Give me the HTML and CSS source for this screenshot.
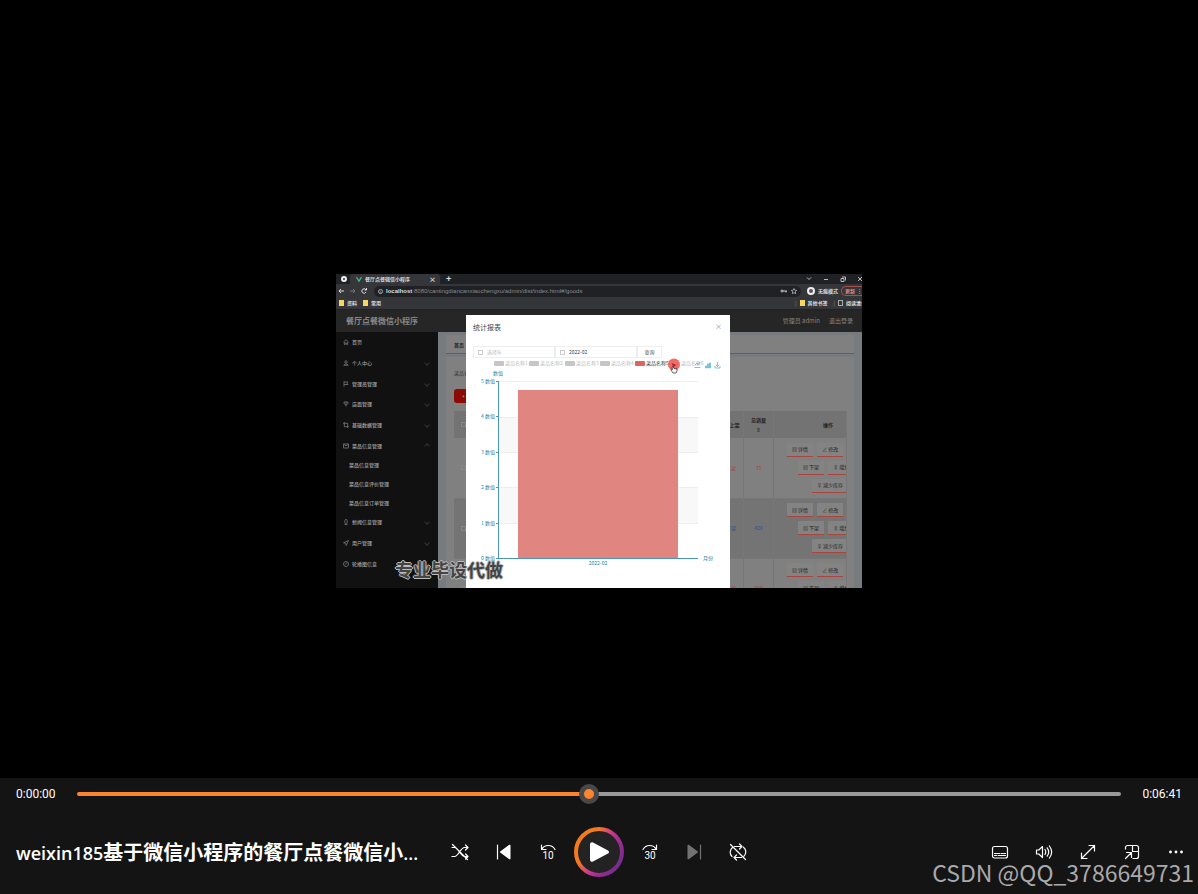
FILE: index.html
```html
<!DOCTYPE html>
<html lang="zh-CN">
<head>
<meta charset="utf-8">
<meta name="viewport" content="width=device-width, initial-scale=1">
<title>weixin185基于微信小程序的餐厅点餐微信小程序</title>
<link rel="stylesheet" href="styles.css">
</head>
<body>
<main class="player">
  <section class="stage">
    <div class="video">
      <div class="browser">
        <div class="tabs">
          <span class="globe"></span>
          <div class="tab">
            <svg class="vue" viewBox="0 0 6 6"><path d="M.5 1 3 5.2 5.500 1" fill="none" stroke="#3fb68b" stroke-width="1.300"/></svg>
            <span class="tab-name">餐厅点餐微信小程序</span><span class="shut">×</span>
          </div>
          <span class="plus">+</span>
          <svg class="win" viewBox="0 0 56 8"><g fill="none" stroke="#bbb" stroke-width="1"><path d="m1 2.500 2 2 2-2M18 4.500h4M52 2l4 4m0-4-4 4"/><path d="M35 3.500h3v3h-3zM36 2h3.500v3.500"/></g></svg>
        </div>
        <div class="address">
          <svg class="nav" viewBox="0 0 32 8"><g fill="none" stroke="#ddd"><path d="M6 4H1m2-2L1 4l2 2"/><path stroke="#777" d="M12 4h5m-2-2 2 2-2 2"/><path d="M28 3a2.200 2.200 0 1 0 0 2M28.500 1v2h-2"/></g></svg>
          <div class="url"><span class="info">i</span><b>localhost</b><span class="path">:8080/cantingdiancanxiaochengxu/admin/dist/index.html#/goods</span>
            <svg class="keys" viewBox="0 0 20 8"><g fill="none" stroke="#ccc"><circle cx="3" cy="4" r="1"/><path d="M4 4h4M7 4v1.500"/><path d="m15 1.500.8 1.700 1.900.2-1.400 1.300.4 1.900-1.700-.9-1.700.9.4-1.900-1.400-1.300 1.900-.2z" stroke-width=".7"/></g></svg>
          </div>
          <span class="face"></span><span class="mode">无痕模式</span><span class="update">更新&nbsp; ⋮</span>
        </div>
        <div class="marks"><i></i><span>资料</span><i></i><span>常用</span><span class="grow"></span><span class="bar">|</span><i></i><span>其他书签</span><span class="bar">|</span><i class="list"></i><span>阅读清单</span></div>
      </div>
      <div class="app-head"><strong>餐厅点餐微信小程序</strong><span>管理员 admin</span><span>退出登录</span></div>
      <div class="app">
        <ul class="menu">
          <li><svg viewBox="0 0 6 6"><path d="M.5 3 3 .7 5.500 3M1.300 3v2.500h1V4h1.400v1.500h1V3"/></svg>首页</li>
          <li class="more"><svg viewBox="0 0 6 6"><circle cx="3" cy="2" r="1.200"/><path d="M.8 5.300h4.400L4 4H2z"/></svg>个人中心</li>
          <li class="more"><svg viewBox="0 0 6 6"><path d="M1 .5v5M1 1h4L4 2.200l1 1.300H1"/></svg>管理员管理</li>
          <li class="more"><svg viewBox="0 0 6 6"><path d="M1 1h4v1.500L3 4 1 2.500zM3 4v1.500M2 2h2"/></svg>店面管理</li>
          <li class="more"><svg viewBox="0 0 6 6"><path d="M1.300 0v4.700H6M0 1.300h4.700V6"/></svg>基础数据管理</li>
          <li class="more open"><svg viewBox="0 0 6 6"><path d="M.5 1h5v4h-5zl2.500 2 2.500-2"/></svg>菜品信息管理</li>
          <li class="sub">菜品信息管理</li>
          <li class="sub">菜品信息评价管理</li>
          <li class="sub">菜品信息订单管理</li>
          <li class="more"><svg viewBox="0 0 6 6"><rect x="1.800" y=".5" width="2.400" height="4" rx="1"/><path d="M1.500 5.500h3"/></svg>新闻信息管理</li>
          <li class="more"><svg viewBox="0 0 6 6"><path d="m.5 2.800 5-2.300-2.300 5-.5-2.200z"/></svg>用户管理</li>
          <li><svg viewBox="0 0 6 6"><circle cx="3" cy="3" r="2.500"/><path d="m2.500 3.500 1.500-2"/></svg>轮播图信息</li>
        </ul>
        <div class="page">
          <div class="crumb">首页</div>
          <div class="panel">
            <div class="search">菜品名称</div>
            <button class="add" type="button">+ 新增</button>
            <table class="goods">
              <thead><tr><th class="c-pick"><input type="checkbox" aria-label="全选"></th><th class="c-up">上架</th><th class="c-sum">总销量<small>0</small></th><th class="c-ops">操作</th></tr></thead>
              <tbody>
                <tr><td><input type="checkbox" aria-label="选择 1"></td><td class="red up">上架</td><td class="red">35</td><td><div class="ops"><div><button type="button">▤ 详情</button><button type="button">∠ 修改</button></div><div class="far"><button type="button">▤ 下架</button><button type="button">♀ 增加库存</button></div><div class="end"><button type="button">♀ 减少库存</button></div></div></td></tr>
                <tr class="alt"><td><input type="checkbox" aria-label="选择 2"></td><td class="blue up">下架</td><td class="blue">426</td><td><div class="ops"><div><button type="button">▤ 详情</button><button type="button">∠ 修改</button></div><div class="far"><button type="button">▤ 下架</button><button type="button">♀ 增加库存</button></div><div class="end"><button type="button">♀ 减少库存</button></div></div></td></tr>
                <tr><td><input type="checkbox" aria-label="选择 3"></td><td class="red up">上架</td><td class="red">280</td><td><div class="ops"><div><button type="button">▤ 详情</button><button type="button">∠ 修改</button></div><div class="far"><button type="button">▤ 下架</button><button type="button">♀ 增加库存</button></div><div class="end"><button type="button">♀ 减少库存</button></div></div></td></tr>
              </tbody>
            </table>
          </div>
        </div>
      </div>
      <div class="modal">
        <header><span>统计报表</span><button type="button" aria-label="关闭">×</button></header>
        <form class="filter"><label><i></i><input type="text" placeholder="选择年" aria-label="选择年"></label><label><i></i><input type="text" value="2022-02" aria-label="月份"></label><button type="button">查询</button></form>
        <svg class="chart" viewBox="466 358 264 230">
          <g class="off"><rect x="494" y="361" width="10" height="5" rx="1"/><text x="505" y="365">菜品名称1</text><rect x="529" y="361" width="10" height="5" rx="1"/><text x="540" y="365">菜品名称2</text><rect x="565" y="361" width="10" height="5" rx="1"/><text x="576" y="365">菜品名称3</text><rect x="600" y="361" width="10" height="5" rx="1"/><text x="611" y="365">菜品名称4</text><text x="681" y="365">菜品名称6</text></g>
          <rect x="635" y="361" width="10" height="5" rx="1" fill="#d96661"/><text x="646" y="365">菜品名称5</text>
          <g fill="#f8f8f8"><path d="M498 417h200v35H498zM498 488h200v35H498z"/></g>
          <path d="M498 381.500h200M498 417.500h200M498 452.500h200M498 487.500h200M498 523.500h200" stroke="#eee"/>
          <rect x="518" y="390" width="160" height="168" fill="#e08580"/>
          <path d="M498.500 381v178M496 558.500h202M496 381.500h2M496 416.500h2M496 452.500h2M496 487.500h2M496 523.500h2" stroke="#4a97b5"/>
          <g class="axis"><text x="498" y="375" text-anchor="middle">数值</text><g text-anchor="end"><text x="495" y="383">5 数值</text><text x="495" y="418">4 数值</text><text x="495" y="454">3 数值</text><text x="495" y="489">2 数值</text><text x="495" y="525">1 数值</text><text x="495" y="560">0 数值</text></g><text x="703" y="560">月份</text><text x="598" y="565" text-anchor="middle">2022-02</text></g>
          <g fill="none" stroke="#5ab8c4" stroke-width=".8"><path d="M694.500 367.500h6M695 365l2-2 1 2 2-3M705.500 368v-2h1v2zM707.500 368v-4h1v4zM709.500 368v-5h1v5zM715 366v2h5v-2M717.500 362v4.500m-1.700-1.700 1.700 1.700 1.700-1.700"/></g>
          <circle cx="674" cy="364.500" r="6" fill="#f05a55" opacity=".9"/>
          <path d="m672 367 1-.5 1 2 3 .5v2l-1 2h-3l-2-3 .2-1 1.300.5z" fill="#fff" stroke="#222" stroke-width=".7"/>
          <path d="m671.500 363 5 2-2 1-.7 2z" fill="#a52c28"/>
        </svg>
      </div>
      <div class="caption">专业毕设代做</div>
    </div>
  </section>

  <footer class="controls">
    <div class="timeline"><time>0:00:00</time><input class="seek" type="range" min="0" max="100" value="49" aria-label="播放进度"><time class="total">0:06:41</time></div>
    <div class="deck">
      <h1 class="title"><span>weixin185</span>基于微信小程序的餐厅点餐微信小<span>...</span></h1>
      <div class="group">
        <button type="button" aria-label="随机播放"><svg viewBox="0 0 20 20"><path d="M2 5.500h2.500c4 0 6 9 10 9H18M2 14.500h2.500c4 0 6-9 10-9H18M15.500 3l2.500 2.500L15.500 8M15.500 12l2.500 2.500-2.500 2.500M2.500 2.500l15 15"/></svg></button>
        <button type="button" aria-label="上一个"><svg viewBox="0 0 20 20"><path d="M3.500 3v14"/><path class="solid" d="M16.500 3.500v13c0 .8-.7 1-1.200.7L6.500 10.800a1 1 0 0 1 0-1.600l8.800-6.400c.5-.4 1.200 0 1.200.7z"/></svg></button>
        <button type="button" aria-label="后退 10 秒"><svg viewBox="0 0 20 20"><path d="M3.500 3v4.500H8M3.800 7.200C6.500 2.500 14 2 17 7.500"/><text x="10" y="17">10</text></svg></button>
        <button class="play" type="button" aria-label="播放"><svg viewBox="0 0 50 50"><defs><linearGradient id="ring" x1="0" y1=".2" x2="1" y2=".8"><stop offset=".28" stop-color="#f47a20"/><stop offset=".52" stop-color="#cf3590"/><stop offset=".72" stop-color="#9d2b91"/><stop offset="1" stop-color="#6b2e8a"/></linearGradient></defs><circle cx="25" cy="25" r="23" fill="#232323" stroke="url(#ring)" stroke-width="4"/><path class="solid" d="M16 17.200c0-1.600 1.600-2.500 3-1.800l15 8c1.300.7 1.300 2.500 0 3.200l-15 8c-1.400.7-3-.2-3-1.800z"/></svg></button>
        <button type="button" aria-label="前进 30 秒"><svg viewBox="0 0 20 20"><path d="M16.500 3v4.500H12M16.200 7.200C13.500 2.500 6 2 3 7.500"/><text x="10" y="17">30</text></svg></button>
        <button type="button" aria-label="下一个" disabled><svg viewBox="0 0 20 20"><path d="M16.500 3v14"/><path class="solid" d="M3.500 3.500v13c0 .8.700 1 1.200.7l8.800-6.400a1 1 0 0 0 0-1.600L4.700 2.800c-.5-.4-1.200 0-1.200.7z"/></svg></button>
        <button type="button" aria-label="重复播放"><svg viewBox="0 0 20 20"><path d="M11.500 2 14 4.500 11.500 7M6.500 4.500H14M4.500 5.500C1.500 8 1.500 12 4 14.500M8.500 18 6 15.500 8.500 13M6 15.500h7.500M15.500 5.200c3 2.500 3 6.300.5 9M2.500 2.500l15 15"/></svg></button>
      </div>
      <div class="group right">
        <button type="button" aria-label="字幕"><svg viewBox="0 0 20 20"><rect x="2.500" y="4.500" width="15" height="11.500" rx="2"/><path d="M4.500 11.500h5M11 11.500h2M14 11.500h1.500M4.500 13.500h2M8 13.500h7.500"/></svg></button>
        <button type="button" aria-label="音量"><svg viewBox="0 0 20 20"><path d="M2.500 8v4h2.300L8.500 15.500v-11L4.800 8zM11 7.500q1.500 2.500 0 5M13.200 5.800q3 4.200 0 8.400M15.400 4q4.500 6 0 12"/></svg></button>
        <button type="button" aria-label="全屏"><svg viewBox="0 0 20 20"><path d="M3.500 16.500l13-13M11 3.500h5.500V9M3.500 11v5.500H9"/></svg></button>
        <button type="button" aria-label="迷你播放器"><svg viewBox="0 0 20 20"><path d="M3.500 7V5.500a2 2 0 0 1 2-2h9a2 2 0 0 1 2 2v9a2 2 0 0 1-2 2H11M10.500 3.500v6h6M3.500 16.500l5.500-5.500M4.500 10.500h5v5"/></svg></button>
        <button type="button" aria-label="更多"><svg viewBox="0 0 20 20"><g class="solid"><circle cx="4.500" cy="10" r="1.400"/><circle cx="10" cy="10" r="1.400"/><circle cx="15.500" cy="10" r="1.400"/></g></svg></button>
      </div>
    </div>
  </footer>
  <div class="watermark">CSDN @QQ_3786649731</div>
</main>
</body>
</html>
```
FILE: styles.css
```css
* { box-sizing: border-box; }
body { margin: 0; background: #000; color: #fff; font-family: "Liberation Sans", "Noto Sans CJK SC", sans-serif; }
button, input { font: inherit; color: inherit; }
button { border: 0; background: none; padding: 0; }
.player { position: relative; min-height: 100vh; display: flex; flex-direction: column; }
.stage { flex: 1; display: flex; align-items: center; justify-content: center; padding-top: 84px; }

/* Video frame */
.video { position: relative; width: min(100%, 526px); aspect-ratio: 526 / 314; overflow: hidden; display: flex; flex-direction: column; font: 5px/6px "Noto Sans CJK SC", sans-serif; }
.browser { background: #35363a; color: #ddd; white-space: nowrap; }
.tabs { display: flex; align-items: center; height: 10px; padding-left: 5px; background: #202124; }
.globe { width: 6px; height: 6px; border: 2px solid #eee; border-radius: 50%; background: #333; }
.tab { display: flex; align-items: center; gap: 3px; width: 90px; height: 10px; margin-left: 3px; padding: 0 4px 0 6px; background: #35363a; border-radius: 3px 3px 0 0; }
.vue { width: 6px; height: 6px; }
.tab-name { flex: 1; font-weight: 700; }
.shut { font-size: 7px; font-weight: 700; }
.plus { flex: 1; padding-left: 6px; font-size: 9px; font-weight: 700; }
.win { width: 56px; height: 8px; }
.address { display: flex; align-items: center; height: 14px; padding-left: 2px; }
.nav { width: 32px; height: 8px; }
.url { display: flex; align-items: center; flex: 1; height: 11px; margin: 0 6px 0 4px; padding: 0 2px 0 4px; border-radius: 6px; background: #202124; font-family: "Liberation Sans", sans-serif; font-size: 6px; }
.info { width: 5px; height: 5px; margin-right: 3px; border: 1px solid #aaa; border-radius: 50%; font-size: 4px; line-height: 3px; text-align: center; }
.path { flex: 1; color: #898b8f; }
.keys { width: 20px; height: 8px; }
.face { width: 8px; height: 8px; border: 2px solid #eee; border-radius: 50%; background: #555; }
.mode { margin: 0 3px; font-weight: 700; }
.update { width: 21px; padding: 1px 3px; border: 1px solid #a0524b; border-right: 0; border-radius: 6px 0 0 6px; color: #e5877f; font-weight: 700; }
.marks { display: flex; align-items: center; gap: 3px; height: 12px; padding: 0 0 2px 3px; border-bottom: 1px solid #222; font-weight: 700; }
.marks i { width: 5px; height: 6px; background: #f7d560; }
.marks i + span { margin-right: 3px; }
.marks .list { background: none; border: 1px solid #aaa; }
.marks i:last-of-type + span { margin-right: 0; width: 16px; overflow: hidden; }
.grow { flex: 1; }
.bar { color: #777; }
.app-head { display: flex; align-items: center; gap: 9px; height: 22px; padding: 0 9px 0 10px; background: #262626; color: #858585; font-size: 6px; }
.app-head strong { flex: 1; font-size: 8px; color: #888; }
.app { display: flex; flex: 1; min-height: 0; }
.menu { display: flex; flex-direction: column; width: 102px; margin: 0; padding: 0 0 14px; background: #111; color: #a0a0a0; font-weight: 500; list-style: none; }
.menu li { flex: 11; display: flex; align-items: center; gap: 3px; padding: 0 9px 0 7px; }
.menu .sub { flex: 10; padding-left: 13px; }
.menu svg { width: 6px; height: 6px; fill: none; stroke: #666; stroke-width: 1; }
.menu .more::after { content: ""; width: 3px; height: 3px; margin-left: auto; border: solid #333; border-width: 0 1px 1px 0; transform: rotate(45deg); }
.menu .open::after { transform: rotate(225deg); }
.page { flex: 1; min-width: 0; overflow: hidden; padding: 3px 8px 0; background: #787b7e; }
.crumb { height: 19px; padding: 7px 8px 0; background: #808080; border-bottom: 1px solid #606060; color: #222; font-weight: 700; }
.panel { margin-top: 3px; padding: 13px 7px 0 8px; background: #808080; color: #333; }
.search { height: 19px; }
.add { display: block; height: 14px; width: 30px; padding-left: 8px; border-radius: 3px; background: #8c0b05; color: #ccc; text-align: left; }
.goods { width: 100%; margin-top: 8px; border-collapse: collapse; table-layout: fixed; text-align: center; }
.goods th, .goods td { padding: 0; border-right: 1px solid #777; overflow: hidden; }
.goods th { height: 27px; background: #737373; color: #222; }
.goods td { height: 60px; border-bottom: 1px solid #777; }
.goods .alt { background: #747474; }
.goods input { display: block; appearance: none; width: 5px; height: 5px; margin: 0 0 0 7px; border: 1px solid #888; }
.goods small { display: block; padding-top: 4px; font-size: 5px; font-weight: 400; }
.c-up { width: 18px; }
.c-sum { width: 30px; }
.c-ops { width: 73px; padding-left: 36px !important; }
.goods .red { color: #a8413c; }
.goods .blue { color: #28558a; }
.up { text-align: left; }
.ops { display: flex; flex-direction: column; gap: 4px; height: 54px; padding: 2px 0 0 13px; }
.ops div { display: flex; gap: 4px; height: 14px; }
.ops .far { padding-left: 11px; }
.ops .end { padding-left: 25px; }
.ops button { flex: none; min-width: 26px; padding: 0 5px; border-bottom: 1px solid #a8453f; color: #222; background: #838383; }
.modal { position: absolute; left: 130px; top: 41px; bottom: 0; width: 264px; background: #fff; color: #444; }
.modal header { display: flex; justify-content: space-between; height: 31px; padding: 8px 8px 0 7px; font-size: 7px; line-height: 8px; }
.modal header button { height: 5px; color: #888; font-size: 7px; line-height: 4px; }
.filter { display: flex; height: 12px; margin-left: 7px; }
.filter label { display: flex; align-items: center; width: 82px; gap: 4px; padding-left: 4px; border: 1px solid #eee; }
.filter i { width: 5px; height: 5px; border: 1px solid #ccc; }
.filter input { flex: 1; min-width: 0; padding: 0; border: 0; background: none; }
.filter input::placeholder { color: #bbb; }
.filter button { width: 25px; border: 1px solid #eee; }
.chart { display: block; width: 100%; }
.chart text { fill: #333; font-size: 5px; }
.chart .off rect { fill: #c6c6c6; }
.chart .off text { fill: #bbb; }
.chart .axis text { fill: #2585aa; }
.caption { position: absolute; left: 59px; top: 283px; color: #444; font-size: 18px; font-weight: 700; line-height: 24px; white-space: nowrap; text-shadow: 1px 0 #bbb, -1px 0 #bbb, 0 1px #bbb, 0 -1px #bbb; }

/* Player controls */
.controls { height: 116px; background: #141414; }
.timeline { display: grid; grid-template-columns: 45px 1fr 45px; align-items: center; gap: 16px; height: 32px; padding: 0 16px; font: 12px/16px Roboto, sans-serif; }
.total { text-align: right; }
.seek { appearance: none; width: 100%; height: 20px; margin: 0; background: none; }
.seek::-webkit-slider-runnable-track { height: 4px; border-radius: 2px; background: linear-gradient(90deg, #ff8430 49%, #999 49%); }
.seek::-webkit-slider-thumb { appearance: none; width: 20px; height: 20px; margin-top: -8px; border: 5px solid #484848; border-radius: 50%; background: #ff8430; }
.deck { display: grid; grid-template-columns: 1fr auto 1fr; align-items: center; height: 84px; }
.title { min-width: 0; margin: 0 0 0 16px; overflow: hidden; white-space: nowrap; text-overflow: ellipsis; font: 700 20px/28px "Noto Sans CJK SC", sans-serif; }
.title span { font: 600 18px/28px "Open Sans", sans-serif; }
.group { display: flex; align-items: center; }
.right { justify-content: flex-end; }
.group button { display: grid; place-items: center; width: 44px; height: 44px; }
.group svg { width: 20px; height: 20px; fill: none; stroke: #fff; stroke-width: 1.2; stroke-linecap: round; stroke-linejoin: round; }
.group .solid { fill: #fff; stroke: none; }
.group text { fill: #fff; stroke: none; font: 10px Roboto, sans-serif; text-anchor: middle; }
.group button:disabled { opacity: .4; }
.group .play { width: 58px; height: 50px; }
.play svg { width: 50px; height: 50px; }
.watermark { position: absolute; right: 4px; bottom: 7px; color: #aaa; font: 23px/30px "Noto Sans CJK SC", sans-serif; white-space: nowrap; }
```
